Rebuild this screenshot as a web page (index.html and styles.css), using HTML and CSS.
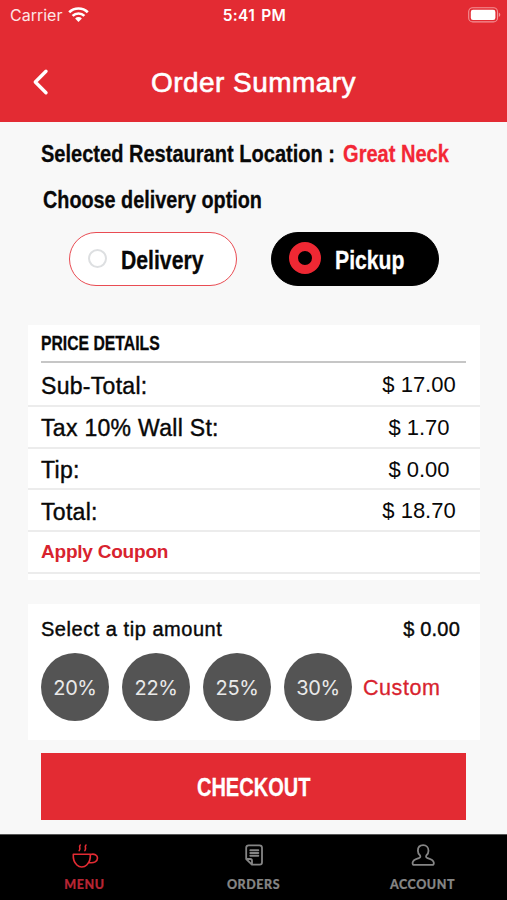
FILE: index.html
```html
<!DOCTYPE html>
<html lang="en">
<head>
<meta charset="utf-8">
<title>Order Summary</title>
<link rel="stylesheet" href="styles.css">
</head>
<body>
<header class="header">
  <div class="status">
    <div class="carrier"><span>Carrier</span>
      <svg width="21" height="16" viewBox="0 0 21 16" fill="none" stroke="#fff" stroke-width="2.7"><path d="M1.2 5.3a13.3 13.3 0 0 1 18.6 0M4.6 8.9a8.4 8.4 0 0 1 11.8 0"/><path d="M7.1 11.4a4.9 4.9 0 0 1 6.8 0l-3.4 3.6z" fill="#fff" stroke="none"/></svg>
    </div>
    <span class="clock">5:41 PM</span>
    <svg class="battery" width="33" height="16" viewBox="0 0 33 16"><rect x=".7" y=".7" width="28.8" height="14.2" rx="4" fill="none" stroke="#f39296" stroke-width="1.1"/><rect x="2.8" y="2.7" width="24.6" height="10.2" rx="2.2" fill="#fff"/><path d="M30.8 5.4q3 2.2 0 4.6z" fill="#f39296"/></svg>
  </div>
  <div class="titlebar">
    <svg class="back" width="18" height="28" viewBox="0 0 18 28" fill="none" stroke="#fff" stroke-width="3.4" stroke-linecap="round" stroke-linejoin="round"><path d="M14 3.2 3.3 14 14 24.8"/></svg>
    <h1>Order Summary</h1>
  </div>
</header>
<main class="main">
  <p class="heading location">Selected Restaurant Location : <span class="place">Great Neck</span></p>
  <p class="heading choose">Choose delivery option</p>
  <div class="options">
    <div class="option"><i class="radio"></i><span>Delivery</span></div>
    <div class="option selected"><i class="radio"></i><span>Pickup</span></div>
  </div>
  <section class="card prices">
    <h2><span>PRICE DETAILS</span></h2>
    <div class="row"><span>Sub-Total:</span><b>$ 17.00</b></div>
    <div class="row"><span>Tax 10% Wall St:</span><b>$ 1.70</b></div>
    <div class="row"><span>Tip:</span><b>$ 0.00</b></div>
    <div class="row"><span>Total:</span><b>$ 18.70</b></div>
    <div class="row coupon"><span>Apply Coupon</span></div>
  </section>
  <section class="card tips">
    <div class="tip-head"><span class="tip-label">Select a tip amount</span><span>$ 0.00</span></div>
    <div class="tip-list"><span class="tip">20%</span><span class="tip">22%</span><span class="tip">25%</span><span class="tip">30%</span><span class="custom">Custom</span></div>
  </section>
  <div class="checkout"><span>CHECKOUT</span></div>
</main>
<nav class="nav">
  <div class="tab active">
    <svg width="28" height="26" viewBox="0 0 28 26" fill="none" stroke="#e32b33" stroke-width="1.6" stroke-linecap="round" stroke-linejoin="round"><path d="M2.300 11.200h17c.3 4.200-.6 8-3.600 10.800-1.600 1.600-3.300 2-4.900 2s-3.300-.4-4.900-2C2.900 19.200 2 15.400 2.300 11.200zM19.200 11.600c4.200-1.500 7.300.7 7.300 3.500 0 3.300-3.400 5.400-8.300 4.500M9.300 2c-2.200 2.100 1.100 2.600-1.100 5.600M15 2c-2.200 2.100 1.100 2.600-1.100 5.600"/></svg>
    <span>MENU</span>
  </div>
  <div class="tab">
    <svg width="28" height="26" viewBox="0 0 28 26" fill="none" stroke="#858585" stroke-width="1.8" stroke-linejoin="round" stroke-linecap="round"><path d="M8.700 2.300h10.800c1.600 0 2.500.9 2.500 2.500v14.400c0 1.600-.9 2.400-2.300 2.400h-7.800L6.200 16V4.800c0-1.600.9-2.500 2.500-2.500zM6.400 16h3.900c1.100 0 1.700.6 1.700 1.700v3.700"/><path d="M10.300 7.200h8M10.300 10h8M10.300 12.700h8" stroke-width="1.900"/></svg>
    <span>ORDERS</span>
  </div>
  <div class="tab">
    <svg width="28" height="26" viewBox="0 0 28 26" fill="none" stroke="#858585" stroke-width="1.800" stroke-linejoin="round"><path d="M14.200 2.200c-3.300 0-5.300 2.300-5.300 5.500 0 2 .8 3.700 2.200 4.800.6 1.400.1 2.200-1.200 2.600-3.200 1-5.800 1.500-6.300 4.600-.2 1.500.4 2.200 1.600 2.200h18c1.200 0 1.800-.7 1.600-2.200-.5-3.100-3.100-3.600-6.300-4.600-1.300-.4-1.800-1.200-1.200-2.600 1.400-1.100 2.200-2.800 2.200-4.800 0-3.200-2-5.500-5.300-5.500z"/></svg>
    <span>ACCOUNT</span>
  </div>
</nav>
</body>
</html>
```
FILE: styles.css
```css
* { box-sizing: border-box; }
body { margin: 0; width: 507px; height: 900px; overflow: hidden; display: flex; flex-direction: column; background: #f8f8f8; color: #080808; font-family: "Liberation Sans", Arial, sans-serif; white-space: nowrap; }
h1, h2, p { margin: 0; }
svg { display: block; flex: none; }
.header { height: 122px; background: #e32b33; color: #fff; }
.status { height: 30px; padding: 0 6px 0 10px; display: grid; grid-template-columns: 1fr auto 1fr; align-items: center; font-family: Inter, sans-serif; }
.carrier { display: flex; align-items: center; gap: 5px; font-size: 16px; color: #fde5e5; }
.carrier svg { margin-left: 1px; }
.clock { margin-left: -2px; font-size: 15.5px; font-weight: 600; letter-spacing: .3px; word-spacing: 2px; }
.battery { justify-self: end; }
.titlebar { height: 106px; display: grid; grid-template-columns: 50px 1fr 50px; align-items: center; }
.back { margin: -2px 0 0 32px; }
.titlebar h1 { text-align: center; font-size: 28px; font-weight: 400; letter-spacing: .45px; -webkit-text-stroke: .6px; }
.main { height: 712px; display: flex; flex-direction: column; }
.heading, .option span, .prices h2 span, .checkout span { font-weight: 700; -webkit-text-stroke: .3px; }
.heading { width: 500px; font-size: 24px; line-height: 30px; margin-left: 41px; transform: scaleX(.835); transform-origin: left; }
.location { margin-top: 17px; }
.place { color: #f32735; margin-left: 3px; }
.choose { margin: 16px 0 0 42.5px; transform: scaleX(.825); }
.options { display: flex; gap: 34px; margin: 17px 0 0 69px; }
.option { width: 168px; height: 54px; border: 1.5px solid #e94c53; border-radius: 27px; background: #fff; display: flex; align-items: center; padding: 2px 0 0 18px; gap: 14px; font-size: 26px; }
.option span { transform: scaleX(.815); transform-origin: left; }
.radio { flex: none; width: 19px; height: 19px; border: 2px solid #dddfe1; border-radius: 50%; margin-top: -4px; }
.selected { background: #000; border-color: #000; color: #fff; padding-left: 17px; }
.selected .radio { width: 32px; height: 32px; border: 9px solid #ee2833; }
.card { margin: 0 27px 0 28px; background: #fff; }
.prices { height: 255px; margin-top: 39px; }
.prices h2 { height: 38px; margin: 0 14px 0 13px; border-bottom: 2px solid #c6c6c6; font-size: 20px; line-height: 37px; }
.prices h2 span { display: inline-block; transform: scaleX(.787); transform-origin: left; }
.row { height: 41.700px; border-bottom: 2px solid #ececec; padding: 4px 22px 0 13px; display: flex; align-items: center; justify-content: space-between; font-size: 23px; }
.row span { letter-spacing: .3px; -webkit-text-stroke: .4px; }
.row b { width: 78px; margin-top: -2px; font-weight: 400; font-size: 22px; display: flex; justify-content: center; }
.prices h2 + .row { height: 44px; }
.coupon { padding-top: 0; color: #d8232e; font-size: 19px; font-weight: 700; }
.coupon span { letter-spacing: -.22px; -webkit-text-stroke: 0; }
.tips { height: 136px; margin-top: 24px; padding: 13px 20px 0 13px; }
.tip-head { display: flex; justify-content: space-between; height: 36px; line-height: 25px; font-size: 20px; -webkit-text-stroke: .4px; }
.tip-head span { letter-spacing: .2px; }
.tip-head .tip-label { letter-spacing: .53px; }
.tip-list { display: flex; align-items: center; gap: 13px; }
.tip { width: 68px; height: 68px; border-radius: 50%; background: #545454; color: #e9e9e9; display: flex; align-items: center; justify-content: center; padding-top: 1px; font-family: Inter, sans-serif; font-size: 20px; letter-spacing: -.4px; }
.custom { margin: 2px 0 0 -2px; color: #d8232e; font-size: 21.5px; letter-spacing: .55px; -webkit-text-stroke: .3px; }
.checkout { height: 67px; margin: 13px 41px 0; padding-top: 1px; background: #e32b33; color: #fff; display: flex; align-items: center; justify-content: center; font-size: 26px; }
.checkout span { transform: scaleX(.77); }
.nav { height: 66px; background: #000; border-top: 1px solid #555; display: grid; grid-template-columns: 1fr 1fr 1fr; color: #858585; font: 900 12.5px/16px Lato, sans-serif; }
.tab { display: flex; flex-direction: column; align-items: center; padding-top: 8px; gap: 8px; letter-spacing: .55px; -webkit-text-stroke: .2px; }
.active { color: #b72534; }
```
